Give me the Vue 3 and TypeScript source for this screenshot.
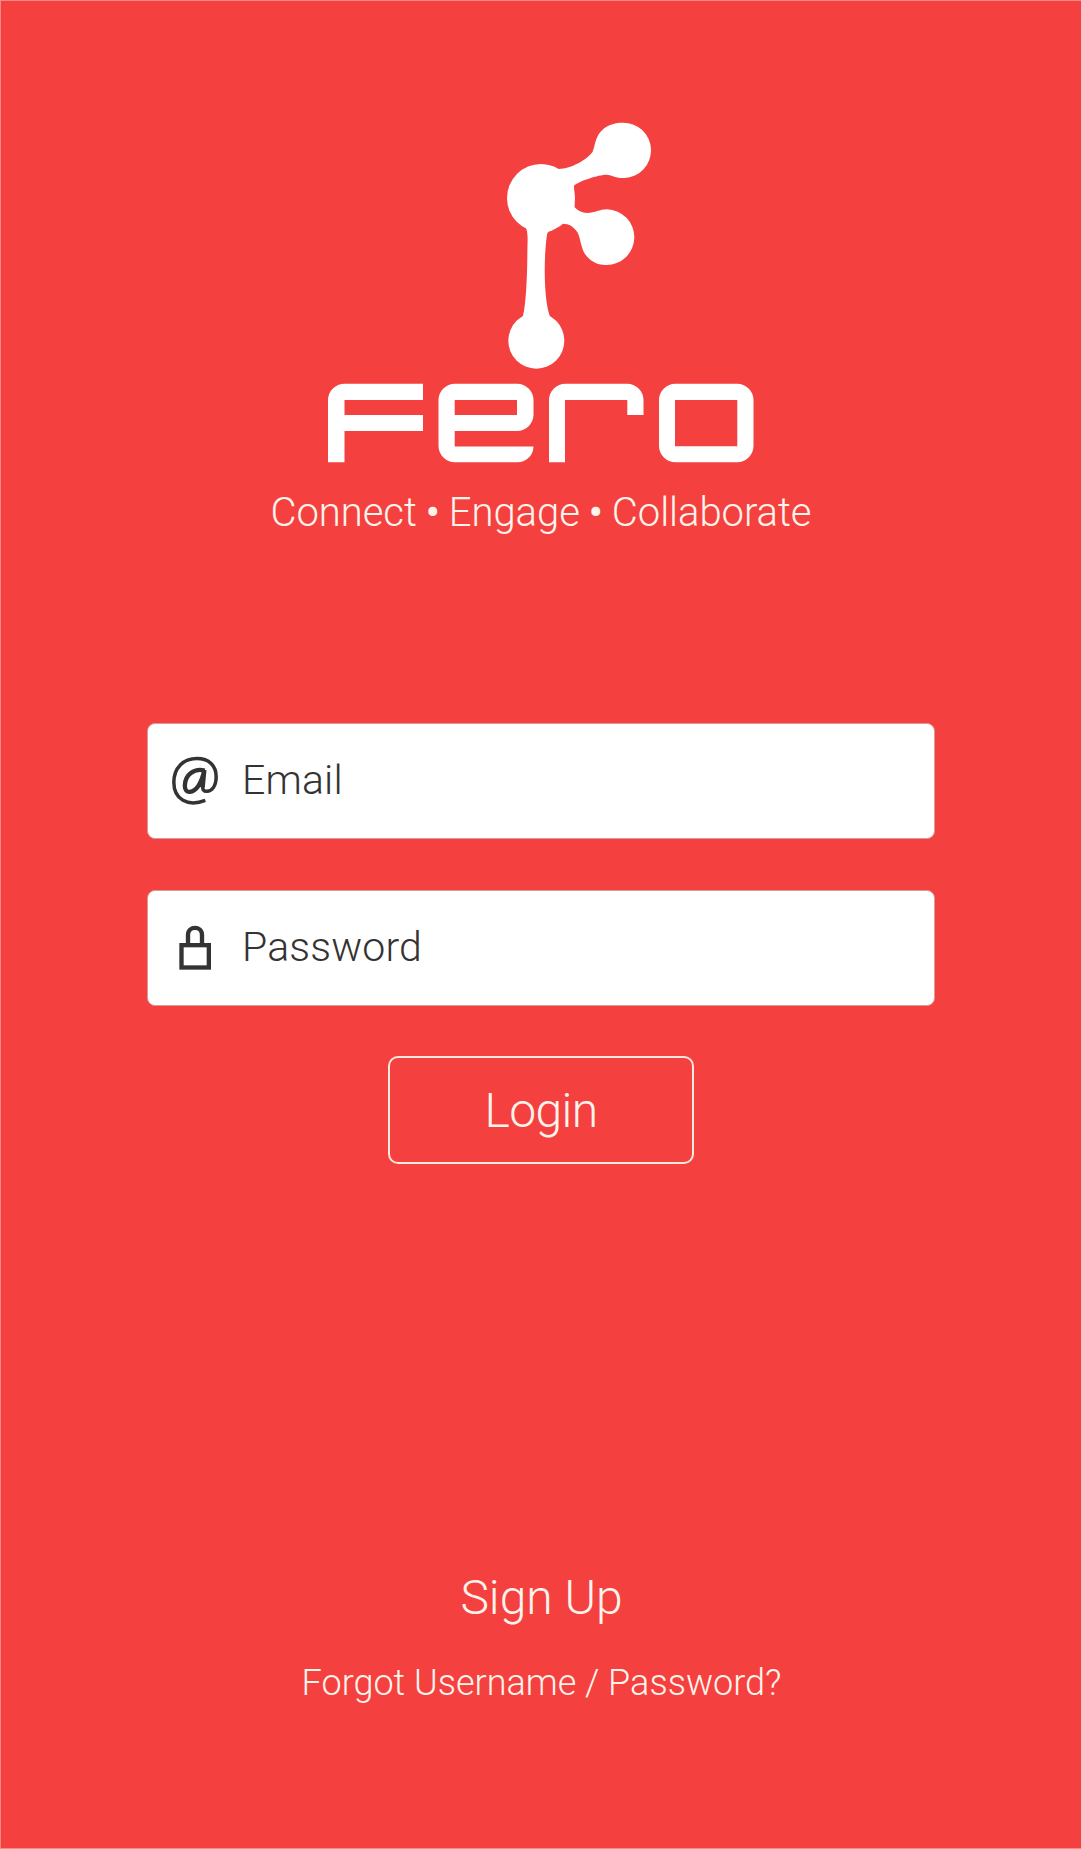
<script setup lang="ts">
import { ref } from 'vue'

const email = ref<string>('')
const password = ref<string>('')
</script>

<template>
  <main class="screen">
    <header class="brand">
      <svg class="logo" viewBox="310 110 460 360" role="img" aria-label="Fero">
        <g fill="#fff" transform="translate(490 110) scale(.33333)">
          <circle cx="153" cy="264" r="102" />
          <circle cx="139" cy="692" r="84" />
          <path d="M206 177C245 175 291 149 308 125C317 101 315 78 341 56C357 43 378 38 397 38A83 83 0 0 1 403 204C375 204 368 196 350 194C326 194 264 214 252 227L254 292C264 303 278 309 290 309C318 309 327 298 351 298A83 83 0 0 1 348 465C307 465 281 436 275 408C268 387 270 374 255 358C245 346 232 341 222 342L140 300Z" />
          <path d="M107 352C116 372 112 400 112 430C112 500 107 590 99 617C96 626 87 629 77 640L201 640C192 629 181 625 178 614C161 560 161 440 171 374C173 363 180 365 188 361L170 330Z" />
        </g>
        <g fill="#fff" fill-rule="evenodd">
          <path d="M328 462.300V400A16.500 16.500 0 0 1 344.500 383.700H423V400H344.500V415H423V431H344.500V462.300Z" />
          <path d="M455 383.700H517A16.500 16.500 0 0 1 533.500 400V414.500A16.500 16.500 0 0 1 517 431H454.700V446.500H533.500A16 16 0 0 1 517 462.300H455A16.500 16.500 0 0 1 438.500 446V400A16.500 16.500 0 0 1 455 383.700ZM454.700 400V415H517V400Z" />
          <path d="M549 462.300V400A16.500 16.500 0 0 1 565.500 383.700H627A16.500 16.500 0 0 1 643.500 400V415H627.300V400H565V462.300Z" />
          <path d="M675.500 383.700H737A16.500 16.500 0 0 1 753.500 400V446A16.500 16.500 0 0 1 737 462.300H675.500A16.500 16.500 0 0 1 659 446V400A16.500 16.500 0 0 1 675.500 383.700ZM675 400V446.200H737.300V400Z" />
        </g>
      </svg>
      <p class="tagline">Connect <b>•</b> Engage <b>•</b> Collaborate</p>
    </header>

    <form class="form" @submit.prevent>
      <label class="field">
        <svg class="icon" viewBox="105 132 150 162" fill="none" stroke="#333">
          <path stroke-width="10.500" d="M211 271C158 292 116.500 268 116.500 217C116.500 173 145 145.500 186 145.500C222 145.500 243.500 167 243.500 200C243.500 229 230 244 216 244C205 244 202 238 204 228" />
          <path stroke-width="13" d="M209 182C178 173 149.500 195 149.500 227C149.500 255 176 248 190 228C197 217 203 205 208 180L203 232" />
        </svg>
        <input v-model="email" type="text" placeholder="Email" />
      </label>
      <label class="field">
        <svg class="icon" viewBox="105 124 150 162" fill="none" stroke="#333">
          <rect x="139.500" y="196.500" width="82" height="67" stroke-width="13" />
          <path stroke-width="13" d="M159 192V165C159 137.500 201 137.500 201 165V192" />
        </svg>
        <input v-model="password" type="password" placeholder="Password" />
      </label>
      <button class="login" type="submit">Login</button>
    </form>

    <footer class="links">
      <a class="signup">Sign Up</a>
      <a class="forgot">Forgot Username / Password?</a>
    </footer>
  </main>
</template>

<style>
body {
  margin: 0;
}
</style>

<style scoped>
.screen {
  box-sizing: border-box;
  width: 1081px;
  height: 1849px;
  padding-top: 109px;
  border: 1px solid #f68885;
  border-right: 0;
  background: #f44140;
  color: #fff4ec;
  font-family: Roboto, sans-serif;
  font-weight: 300;
  display: flex;
  flex-direction: column;
  align-items: center;
}
.brand {
  display: flex;
  flex-direction: column;
  align-items: center;
}
.logo {
  display: block;
  width: 460px;
  height: 360px;
  margin-right: 1px;
}
.tagline {
  margin: 19px 0 0;
  font-size: 40px;
  line-height: 48px;
  letter-spacing: -0.04px;
  white-space: nowrap;
}
.tagline b {
  margin: 0 -0.7px;
  font-weight: 500;
}
.form {
  width: 788px;
  margin-top: 186px;
  display: flex;
  flex-direction: column;
}
.field {
  box-sizing: border-box;
  height: 116px;
  padding-left: 22px;
  border: 1px solid #d99b99;
  border-radius: 8px;
  background: #fff;
  display: flex;
  align-items: center;
}
.field + .field {
  margin-top: 51px;
}
.icon {
  width: 50px;
  height: 54px;
  flex: none;
}
input {
  flex: 1;
  min-width: 0;
  height: 60px;
  margin: 0 0 3px 22px;
  padding: 0;
  border: 0;
  outline: 0;
  background: none;
  color: #333;
  font: 300 41px/60px Roboto, sans-serif;
  letter-spacing: 0.15px;
}
input::placeholder {
  color: #333;
  opacity: 1;
}
.login {
  box-sizing: border-box;
  width: 306px;
  height: 108px;
  margin: 50px auto 0;
  padding: 2px 0 0;
  border: 2px solid #ffe6df;
  border-radius: 10px;
  background: none;
  color: inherit;
  font: 300 48px/60px Roboto, sans-serif;
  letter-spacing: -0.6px;
}
.links {
  margin-top: 406px;
  padding-left: 1px;
  display: flex;
  flex-direction: column;
  align-items: center;
}
.signup {
  font-size: 48px;
  line-height: 56px;
}
.forgot {
  margin-top: 35px;
  font-size: 36px;
  line-height: 44px;
}
</style>
